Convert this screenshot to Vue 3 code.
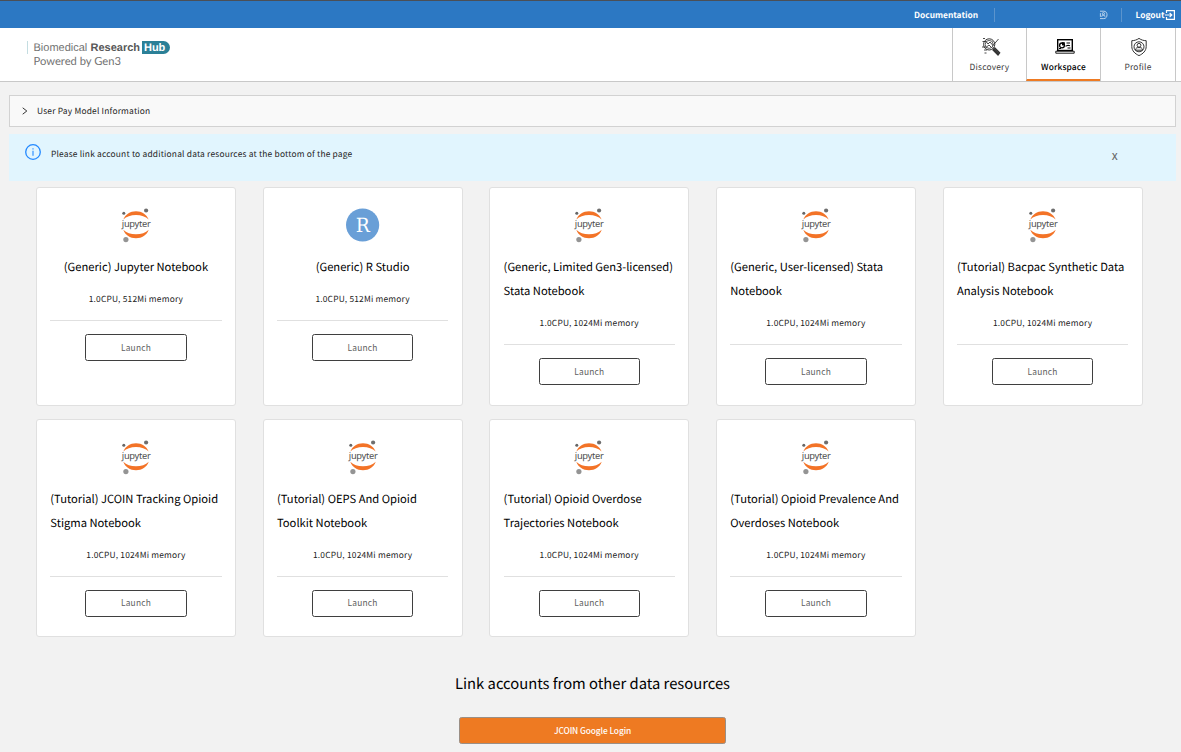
<script setup>
const notebooks = [
  { title: '(Generic) Jupyter Notebook', memory: '512Mi' },
  { title: '(Generic) R Studio', memory: '512Mi', logo: 'r' },
  { title: '(Generic, Limited Gen3-licensed) Stata Notebook', memory: '1024Mi' },
  { title: '(Generic, User-licensed) Stata Notebook', memory: '1024Mi' },
  { title: '(Tutorial) Bacpac Synthetic Data Analysis Notebook', memory: '1024Mi' },
  { title: '(Tutorial) JCOIN Tracking Opioid Stigma Notebook', memory: '1024Mi' },
  { title: '(Tutorial) OEPS And Opioid Toolkit Notebook', memory: '1024Mi' },
  { title: '(Tutorial) Opioid Overdose Trajectories Notebook', memory: '1024Mi' },
  { title: '(Tutorial) Opioid Prevalence And Overdoses Notebook', memory: '1024Mi' },
]
</script>

<template>
  <div class="page">
    <header class="top-bar">
      <a class="top-link doc">Documentation</a>
      <a class="top-link user">
        <svg width="9" height="10" viewBox="0 0 9 10" fill="none" stroke="#c9def2" stroke-width="0.9">
          <path d="M1 1.2H4.8C7 1.2 8 2.8 8 4.8S7 8.6 4.8 8.6H1M1.4 3.2V6.8M2.8 6.8V5.8C2.8 5.1 5.9 5.1 5.9 5.8V6.8" />
          <circle cx="4.4" cy="3.7" r="1.1" />
        </svg>
      </a>
      <a class="top-link logout">Logout
        <svg width="10" height="10" viewBox="0 0 10 10" fill="none" stroke="#fff" stroke-width="1.2">
          <path d="M1.5 3V.6H9.4V9.4H1.5V7M0 5H6.8M4.6 2.8L6.8 5L4.6 7.2" />
        </svg>
      </a>
    </header>

    <nav class="nav-bar">
      <div class="brand">
        <div class="brand-line"><span>Biomedical</span> <b>Research</b><span class="hub">Hub</span></div>
        <div class="brand-sub">Powered by Gen3</div>
      </div>
      <div class="nav-items">
        <a class="nav-item">
          <svg width="20" height="20" viewBox="0 0 20 20" fill="none" stroke="#333" stroke-width="1">
            <circle cx="8.2" cy="7.4" r="5.6" />
            <circle cx="8.2" cy="7.4" r="4" stroke-width=".8" />
            <path d="M1.5 4.5H5L7 7L9 5L12 8.5L17.5 2M1 10H5.5L8 8L10.5 10.5M2 1.5H4M3 13H6M3.5 16H5.5" stroke-width=".9" />
            <path d="M12.2 11.6L18 17.6M13.3 10.6L18.6 15.9L17 18L11.6 12.6" stroke-width="1.4" />
          </svg>
          <span>Discovery</span>
        </a>
        <a class="nav-item active">
          <svg width="20" height="20" viewBox="0 0 20 20" fill="none" stroke="#000">
            <rect x="2.7" y="2.7" width="14.6" height="10.8" stroke-width="1.4" />
            <path d="M.8 14.2H19.2V16.2H.8Z" stroke-width=".9" />
            <circle cx="7" cy="8.4" r="2.4" stroke-width="1.3" />
            <path d="M7 8.4V5.2H9.8V8.4Z" fill="#000" stroke="none" />
            <path d="M11.5 6H15M10.5 9.3L13 8.3L15 8.8M12.5 11H15.5M4 11.5H6" stroke-width="1.1" />
          </svg>
          <span>Workspace</span>
        </a>
        <a class="nav-item">
          <svg width="20" height="20" viewBox="0 0 20 20" fill="none" stroke="#333" stroke-width="1">
            <path d="M10 1.4C12.3 3 14.5 3.6 17.2 3.7V9.5C17.2 13.8 14 16.8 10 18.6C6 16.8 2.8 13.8 2.8 9.5V3.7C5.5 3.6 7.7 3 10 1.4Z" />
            <circle cx="10" cy="9.8" r="5" />
            <circle cx="10" cy="8.3" r="1.9" />
            <path d="M6.5 13.2C6.7 10.4 8.3 10.6 10 10.6S13.3 10.4 13.5 13.2Z" />
          </svg>
          <span>Profile</span>
        </a>
      </div>
    </nav>

    <main>
      <section class="collapse">
        <svg width="6" height="8" viewBox="0 0 6 8" fill="none" stroke="#333" stroke-width="1"><path d="M.7 .8L4.8 4L.7 7.2" /></svg>
        <span>User Pay Model Information</span>
      </section>

      <section class="alert">
        <svg width="16" height="16" viewBox="0 0 16 16" fill="none" stroke="#2389ff">
          <circle cx="8" cy="8" r="7.3" stroke-width="1.3" />
          <path d="M8 6.8V11.8M8 4.2V5.5" stroke-width="1.1" />
        </svg>
        <span class="alert-text">Please link account to additional data resources at the bottom of the page</span>
        <button class="alert-close">x</button>
      </section>

      <section class="grid">
        <article v-for="n in notebooks" :key="n.title" class="card">
          <svg v-if="n.logo === 'r'" class="logo" width="36" height="36" viewBox="0 0 36 36">
            <circle cx="17.6" cy="18" r="16.6" fill="#699fd7" />
            <text class="r-text" x="17.8" y="25.3" text-anchor="middle" textLength="14" lengthAdjust="spacingAndGlyphs">R</text>
          </svg>
          <svg v-else class="logo" width="36" height="36" viewBox="0 0 36 36">
            <path d="M5.3 12.6C7.4 7.4 12 4.3 18 4.3S28.5 7.4 30.7 12.6C27.6 9.6 23.3 8 18 8S8.4 9.6 5.3 12.6Z" fill="#f37327" />
            <path d="M5.3 22.7C8.4 25.9 12.7 27.3 18 27.3S27.6 25.9 30.7 22.7C28.7 28.2 24 31.2 18 31.2S7.4 28.2 5.3 22.7Z" fill="#f37327" />
            <circle cx="5.8" cy="6.2" r="1.5" fill="#666" />
            <circle cx="28.1" cy="3.5" r="2.1" fill="#6e6e6e" />
            <circle cx="7.9" cy="32.6" r="2.6" fill="#949494" />
            <text class="jupyter-text" x="3.8" y="20.3" textLength="29">jupyter</text>
          </svg>
          <h3 class="title">{{ n.title }}</h3>
          <div class="memory">1.0CPU, {{ n.memory }} memory</div>
          <hr class="rule">
          <button class="launch">Launch</button>
        </article>
      </section>

      <section class="link-accounts">
        <h2>Link accounts from other data resources</h2>
        <button class="login">JCOIN Google Login</button>
      </section>
    </main>
  </div>
</template>

<style>
body {
  background: #f2f2f2;
  overflow: hidden;
}
</style>

<style scoped>
.page {
  width: 1181px;
  height: 752px;
  overflow: hidden;
  background: #f2f2f2;
  font-family: "Noto Sans CJK SC", sans-serif;
  font-size: 8.4px;
  letter-spacing: 0.205px;
  color: #222;
  text-rendering: geometricPrecision;
}
button {
  font: inherit;
  letter-spacing: inherit;
  padding: 0;
}
.top-bar {
  box-sizing: border-box;
  height: 28px;
  border-top: 1px solid #4b4f56;
  background: #2c78c3;
  display: flex;
  align-items: center;
  justify-content: flex-end;
  padding-right: 6px;
}
.top-link {
  display: flex;
  align-items: center;
  box-sizing: border-box;
  height: 14px;
  color: #fff;
  font-weight: 700;
  letter-spacing: 0;
}
.doc {
  width: 80.5px;
  border-right: 1px solid #5b94cd;
}
.user {
  width: 127px;
  padding-left: 104px;
  border-right: 1px solid #5b94cd;
}
.logout {
  box-sizing: content-box;
  width: 39.5px;
  padding-left: 14px;
  justify-content: space-between;
}
.top-link svg {
  flex: none;
}
.nav-bar {
  box-sizing: border-box;
  height: 54px;
  background: #fff;
  border-bottom: 1px solid #c8c8c8;
  display: flex;
  justify-content: space-between;
  padding: 0 5px 0 27px;
}
.brand {
  padding-top: 13px;
  font-family: "Liberation Sans", Arial, sans-serif;
  font-size: 11px;
  letter-spacing: 0;
  color: #737373;
}
.brand-line {
  display: flex;
  align-items: center;
  height: 13px;
  padding-left: 5.5px;
  border-left: 1px solid #c4dde1;
  gap: 3.2px;
}
.brand-line > * {
  line-height: 14px;
}
.brand-line b {
  color: #585858;
}
.hub {
  box-sizing: border-box;
  width: 28px;
  height: 13px;
  padding-left: 2px;
  margin-left: -1.3px;
  border-radius: 0 7px 7px 0;
  background: #2b8097;
  color: #fff;
  font-weight: 700;
}
.brand-sub {
  padding-left: 6.5px;
  line-height: 14px;
  margin-top: 1px;
  font-family: Lato, sans-serif;
  font-size: 11.2px;
}
.nav-items {
  display: flex;
  height: 53px;
  border-right: 1px solid #c8c8c8;
}
.nav-item {
  box-sizing: border-box;
  width: 74px;
  border-left: 1px solid #c8c8c8;
  display: flex;
  flex-direction: column;
  align-items: center;
  padding-top: 9px;
  color: #3c3c3c;
}
.nav-item:last-child {
  width: 75px;
}
.nav-item svg {
  margin-left: 3px;
}
.nav-item:last-child svg {
  margin-left: 1px;
}
.nav-item span {
  line-height: 14px;
  margin-top: 3px;
}
.nav-item.active {
  border-bottom: 2px solid #ee7a22;
  color: #000;
  font-weight: 500;
}
.nav-item.active span {
  letter-spacing: 0.12px;
}
main {
  padding: 13px 5px 0 9px;
}
.collapse {
  box-sizing: border-box;
  height: 32px;
  border: 1px solid #d2d2d2;
  background: #f9f9f9;
  display: flex;
  align-items: center;
  gap: 9px;
  padding-left: 12px;
}
.collapse span {
  line-height: 14px;
}
.alert {
  box-sizing: border-box;
  height: 47px;
  margin-top: 7px;
  background: #e1f5fe;
  display: flex;
  align-items: flex-start;
  padding: 10px 58px 0 16px;
}
.alert-text {
  margin-left: 10px;
  margin-top: 1px;
  line-height: 19px;
  flex: 1;
}
.alert-close {
  border: 0;
  background: none;
  color: #666;
  font-size: 12px;
  line-height: 14px;
  margin-top: 4px;
}
.grid {
  display: grid;
  grid-template-columns: repeat(5, 200px);
  grid-auto-rows: 218.3px;
  column-gap: 26.67px;
  row-gap: 13.6px;
  margin: 6.3px 0 0 27px;
}
.card {
  box-sizing: border-box;
  border: 1px solid #e0e0e0;
  border-radius: 3px;
  background: #fff;
  padding: 18.7px 13.4px 0 13.3px;
  display: flex;
  flex-direction: column;
  align-items: center;
}
.logo {
  display: block;
  flex: none;
  height: 36px;
}
.jupyter-text {
  font: 9.3px "Noto Sans", sans-serif;
  fill: #4e4e4e;
  letter-spacing: 0;
}
.r-text {
  font: 19.5px "DejaVu Serif", serif;
  fill: #fff;
  letter-spacing: 0;
}
.title {
  margin: 12.4px 0 0;
  font-size: 11.2px;
  font-weight: 400;
  line-height: 24px;
  letter-spacing: 0;
  color: #000;
}
.memory {
  margin-top: 9.6px;
  line-height: 20px;
}
.rule {
  width: 100%;
  height: 1px;
  border: 0;
  margin: 10.7px 0 13.3px;
  background: #e0e0e0;
}
.launch {
  box-sizing: border-box;
  width: 101.3px;
  height: 26.7px;
  border: 1px solid #3f3f3f;
  border-radius: 2.5px;
  background: #fff;
  color: #606060;
  padding-bottom: 1.5px;
}
.link-accounts {
  display: flex;
  flex-direction: column;
  align-items: center;
}
.link-accounts h2 {
  margin: 34px 0 0;
  font-size: 14.78px;
  line-height: 26px;
  font-weight: 400;
  letter-spacing: 0;
  color: #000;
}
.login {
  box-sizing: border-box;
  margin-top: 20px;
  width: 267px;
  height: 27px;
  border: 1px solid #9a8f86;
  border-radius: 2.5px;
  background: #ee7a22;
  color: #fff;
  font-weight: 500;
  letter-spacing: -0.1px;
  padding-bottom: 2px;
}
</style>
